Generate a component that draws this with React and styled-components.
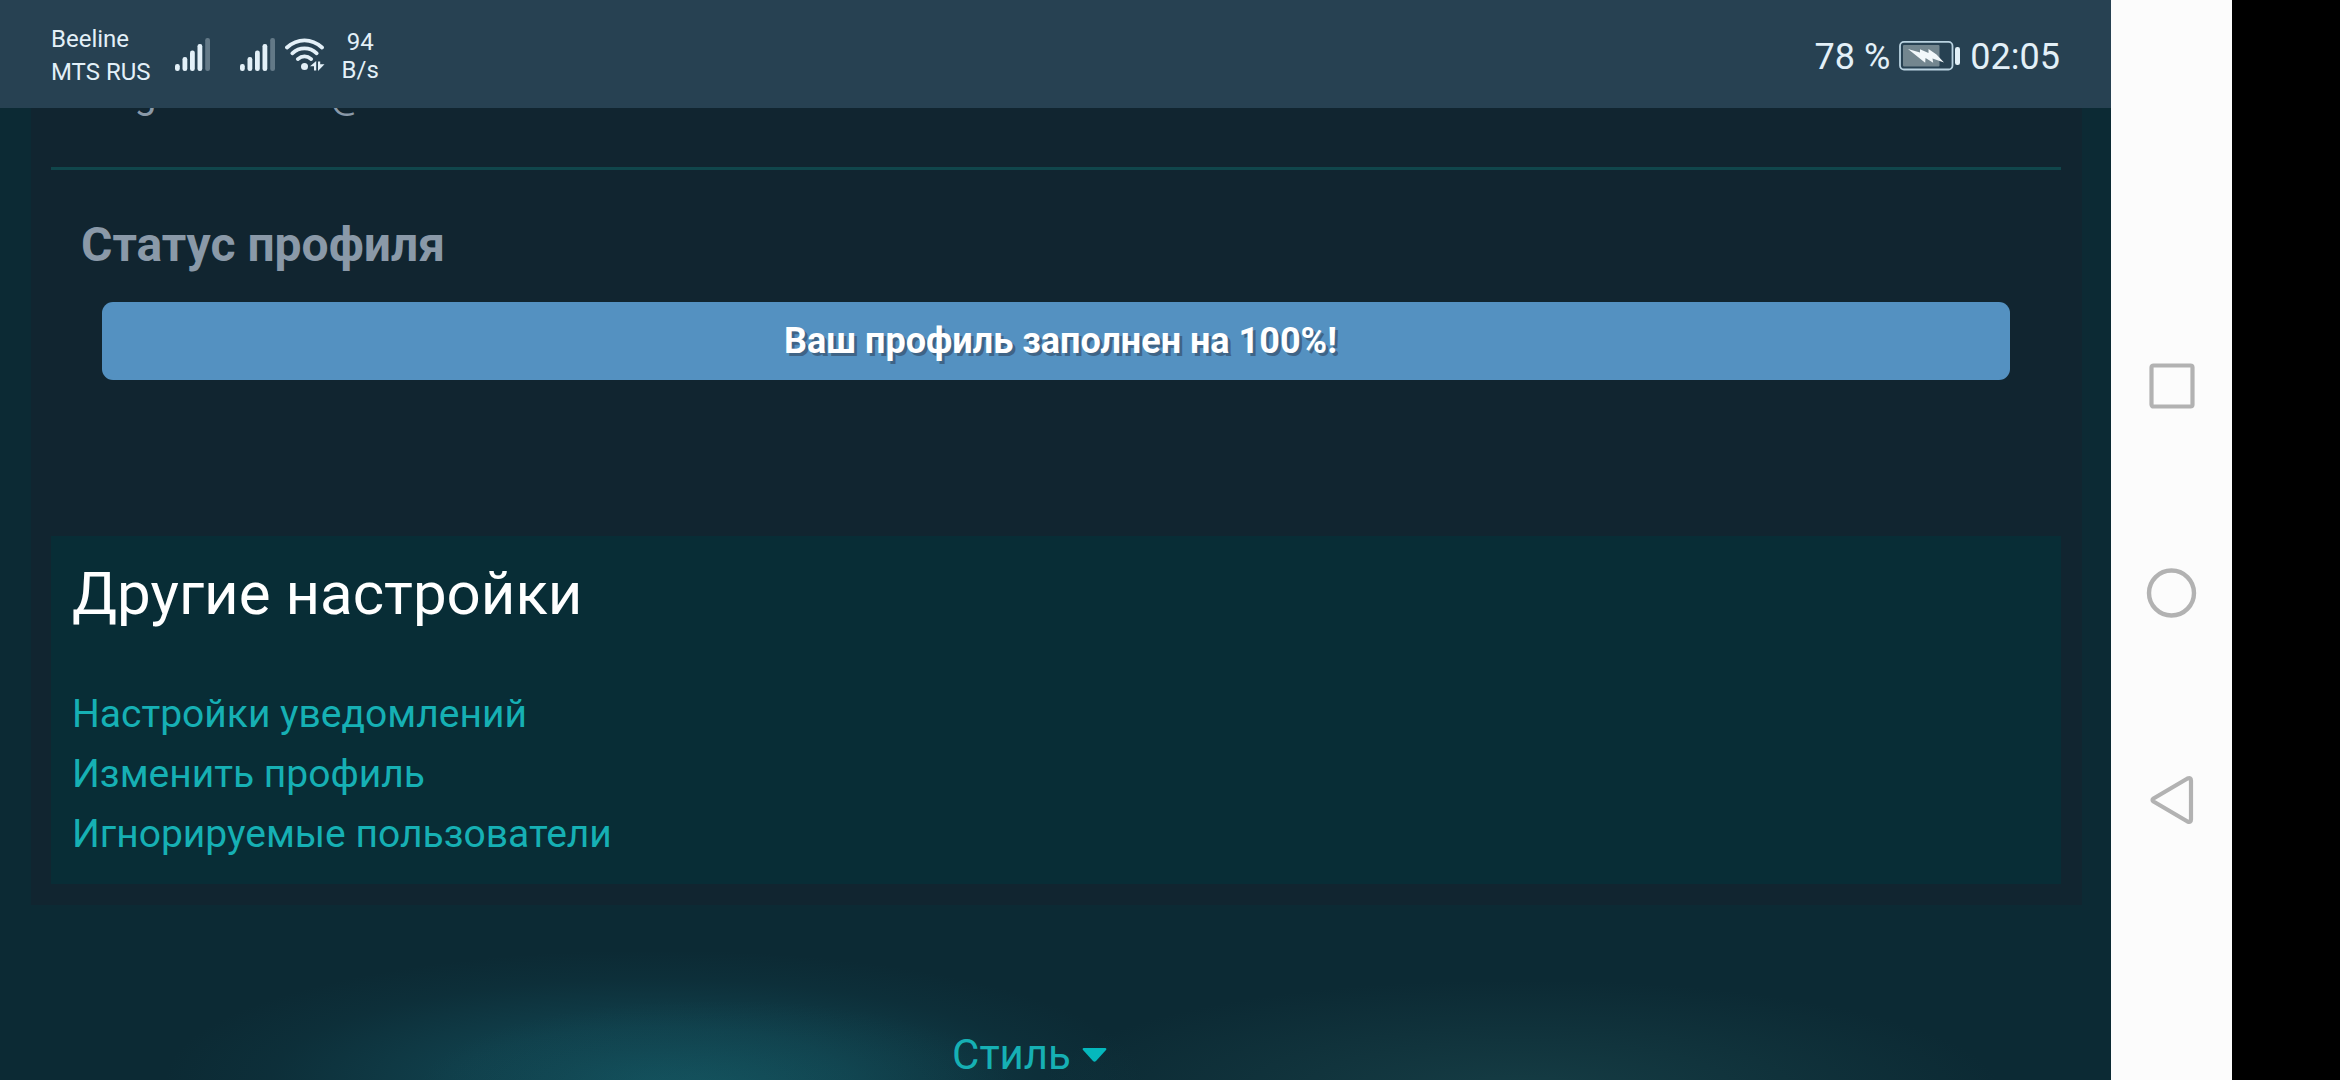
import React from "react";
import styled, { createGlobalStyle } from "styled-components";

const GlobalStyle = createGlobalStyle`
  *, *::before, *::after { box-sizing: border-box; }
  body { margin: 0; background: #000; font-family: Roboto, "Noto Sans", sans-serif; }
  h2, h3, ul, p { margin: 0; padding: 0; }
`;

const Device = styled.div`
  display: flex;
  height: 100vh;
  padding-right: 108px;
  background: #000;
  overflow: hidden;
`;

const Screen = styled.div`
  flex: 1;
  min-width: 0;
  display: flex;
  flex-direction: column;
`;

const StatusBar = styled.header`
  flex: none;
  display: flex;
  justify-content: space-between;
  align-items: center;
  height: 108px;
  padding: 0 51px;
  background: #274152;
  color: #e3f0f8;
`;

const StatusGroup = styled.div`
  display: flex;
  align-items: center;
  gap: ${(p) => p.$gap}px;
`;

const SmallLines = styled.div`
  padding-top: 4px;
  font-size: 24px;
  line-height: ${(p) => p.$line}px;
  text-align: ${(p) => p.$align};
`;

const Carriers = styled(SmallLines)`
  padding-right: 7px;
`;

const StatusText = styled.span`
  padding-top: 5px;
  font-size: 36px;
  line-height: 42px;
`;

const Icon = styled.svg`
  display: block;
  flex: none;
`;

const Page = styled.main`
  flex: 1;
  min-height: 0;
  overflow: hidden;
  padding: 0 29px 0 31px;
  background:
    radial-gradient(ellipse 300px 90px at 34% 101%, rgba(24, 105, 114, 0.35), rgba(24, 105, 114, 0.12) 55%, rgba(24, 105, 114, 0)),
    radial-gradient(ellipse 490px 130px at 31% 100%, rgba(22, 92, 106, 0.6), rgba(22, 92, 106, 0.42) 40%, rgba(22, 92, 106, 0.1) 78%, rgba(22, 92, 106, 0)),
    radial-gradient(ellipse 480px 110px at 72% 101%, rgba(30, 78, 84, 0.5), rgba(30, 78, 84, 0.2) 60%, rgba(30, 78, 84, 0)),
    #0c2a34;
`;

const Panel = styled.section`
  padding: 0 21px 21px 20px;
  background: #112530;
`;

const EmailRow = styled.div`
  display: flex;
  align-items: flex-end;
  height: 62px;
  padding: 0 31px 49px;
  border-bottom: 3px solid #10464b;
  overflow: hidden;
`;

const Email = styled.p`
  color: #8a99a8;
  font-size: 39px;
  line-height: 46px;
`;

const ProfileStatus = styled.div`
  padding: 47px 51px 156px 30px;
`;

const StatusHeading = styled.h3`
  color: #8a99a8;
  font-size: 48px;
  font-weight: 700;
  line-height: 56px;
`;

const Progress = styled.div`
  margin: 29px 0 0 21px;
  padding-left: 9px;
  border-radius: 11px;
  background: #5491c1;
  color: #fff;
  font-size: 36px;
  font-weight: 700;
  line-height: 78px;
  text-align: center;
  text-shadow: 3px 3px 0 rgba(50, 70, 95, 0.6);
`;

const Card = styled.section`
  padding: 22px 21px 20px;
  background: #082d36;
`;

const CardTitle = styled.h2`
  color: #fff;
  font-size: 60px;
  font-weight: 400;
  line-height: 72px;
`;

const Links = styled.ul`
  margin-top: 54px;
  list-style: none;
`;

const LinkItem = styled.li`
  font-size: 39px;
  line-height: 60px;
`;

const Link = styled.a`
  color: #16b0b4;
  text-decoration: none;
`;

const Footer = styled.footer`
  display: flex;
  justify-content: center;
  padding: 120px 54px 0 0;
`;

const StyleButton = styled.button`
  display: flex;
  align-items: center;
  gap: 11px;
  padding: 0;
  border: 0;
  background: none;
  color: #16b0b4;
  font-family: inherit;
  font-size: 42px;
  line-height: 60px;
`;

const NavBar = styled.nav`
  flex: none;
  display: flex;
  flex-direction: column;
  align-items: center;
  justify-content: center;
  gap: 151px;
  width: 121px;
  padding-top: 106px;
  background: #fcfcfc;
`;

const NavButton = styled.button`
  display: block;
  padding: 0;
  border: 0;
  background: none;
  color: #b2b2b2;
`;

const bars = [
  { x: 0, h: 7 },
  { x: 7.5, h: 14 },
  { x: 15, h: 20.5 },
  { x: 22.5, h: 27 },
  { x: 30.2, h: 33, dim: true },
];

function Signal() {
  return (
    <Icon width="35" height="33" viewBox="0 0 35 33" fill="currentColor">
      {bars.map((b) => (
        <rect key={b.x} x={b.x} y={33 - b.h} width="4.8" height={b.h} rx="2.2" opacity={b.dim ? 0.32 : 1} />
      ))}
    </Icon>
  );
}

function Wifi() {
  return (
    <Icon width="40" height="34" viewBox="0 0 40 34" fill="none" stroke="currentColor" strokeWidth="3.8" strokeLinecap="round">
      <path d="M2 10.500C12.500 1 26.500 1 37 10.500" />
      <path d="M7.300 16.300C14.500 9.700 24.500 9.700 31.700 16.300" />
      <path d="M12.800 22.100C17 18.400 22 18.400 26.200 22.100" />
      <circle cx="19.500" cy="29.600" r="3.500" fill="currentColor" stroke="none" />
      <path d="M25 29.300L31.200 24V33.500H29V29.300Z" fill="currentColor" stroke="none" />
      <path d="M33 24.500V34L39.500 27.300H35.200V24.500Z" fill="currentColor" stroke="none" />
    </Icon>
  );
}

function Battery() {
  return (
    <Icon width="62" height="34" viewBox="0 -4 62 34">
      <rect x="1" y="0.900" width="52.500" height="27.600" rx="4" fill="none" stroke="#b9d2e0" strokeWidth="1.800" />
      <rect x="4" y="4" width="36.500" height="21.500" rx="1" fill="#73868f" />
      <path d="M9 8L21 11.500V8.300L29.500 12V8L37.500 13.500L45 21.500L33.500 17.500L34.200 21.800L26.500 17L26.200 21.800Z" fill="#f2f8fb" />
      <rect x="56" y="6" width="5" height="18" rx="2.200" fill="#e3f0f8" />
    </Icon>
  );
}

const links = ["Настройки уведомлений", "Изменить профиль", "Игнорируемые пользователи"];

export default function App() {
  return (
    <Device>
      <GlobalStyle />
      <Screen>
        <StatusBar>
          <StatusGroup $gap={17}>
            <Carriers $line={33} $align="left">
              <div>Beeline</div>
              <div>MTS RUS</div>
            </Carriers>
            <StatusGroup $gap={30}>
              <Signal />
              <StatusGroup $gap={10}>
                <Signal />
                <Wifi />
              </StatusGroup>
            </StatusGroup>
            <SmallLines $line={28} $align="center">
              <div>94</div>
              <div>B/s</div>
            </SmallLines>
          </StatusGroup>
          <StatusGroup $gap={9}>
            <StatusText>78 %</StatusText>
            <Battery />
            <StatusText>02:05</StatusText>
          </StatusGroup>
        </StatusBar>
        <Page>
          <Panel>
            <EmailRow>
              <Email>olegromanova@mail.ru</Email>
            </EmailRow>
            <ProfileStatus>
              <StatusHeading>Статус профиля</StatusHeading>
              <Progress>Ваш профиль заполнен на 100%!</Progress>
            </ProfileStatus>
            <Card>
              <CardTitle>Другие настройки</CardTitle>
              <Links>
                {links.map((text) => (
                  <LinkItem key={text}>
                    <Link href="#">{text}</Link>
                  </LinkItem>
                ))}
              </Links>
            </Card>
          </Panel>
          <Footer>
            <StyleButton type="button">
              Стиль
              <Icon width="25" height="14" viewBox="0 0 25 14">
                <path d="M1.500 0H23.500Q25 0.500 24 2L14 13Q12.500 14.500 11 13L1 2Q0 0.500 1.500 0Z" fill="#05b8bd" />
              </Icon>
            </StyleButton>
          </Footer>
        </Page>
      </Screen>
      <NavBar>
        <NavButton type="button" aria-label="Recent apps">
          <Icon width="56" height="56" viewBox="0 0 56 56" fill="none" stroke="currentColor" strokeWidth="4.200">
            <rect x="7.500" y="7.500" width="41" height="41" rx="2" />
          </Icon>
        </NavButton>
        <NavButton type="button" aria-label="Home">
          <Icon width="56" height="56" viewBox="0 0 56 56" fill="none" stroke="currentColor" strokeWidth="4.400">
            <circle cx="27.500" cy="28" r="22.500" />
          </Icon>
        </NavButton>
        <NavButton type="button" aria-label="Back">
          <Icon width="56" height="56" viewBox="0 0 56 56" fill="none" stroke="currentColor" strokeWidth="4.200" strokeLinejoin="round">
            <path d="M43.500 6.500Q47 5 47 8.500V47.500Q47 51 43.500 49.500L9.500 29.500Q7.500 28 9.500 26.500Z" />
          </Icon>
        </NavButton>
      </NavBar>
    </Device>
  );
}
